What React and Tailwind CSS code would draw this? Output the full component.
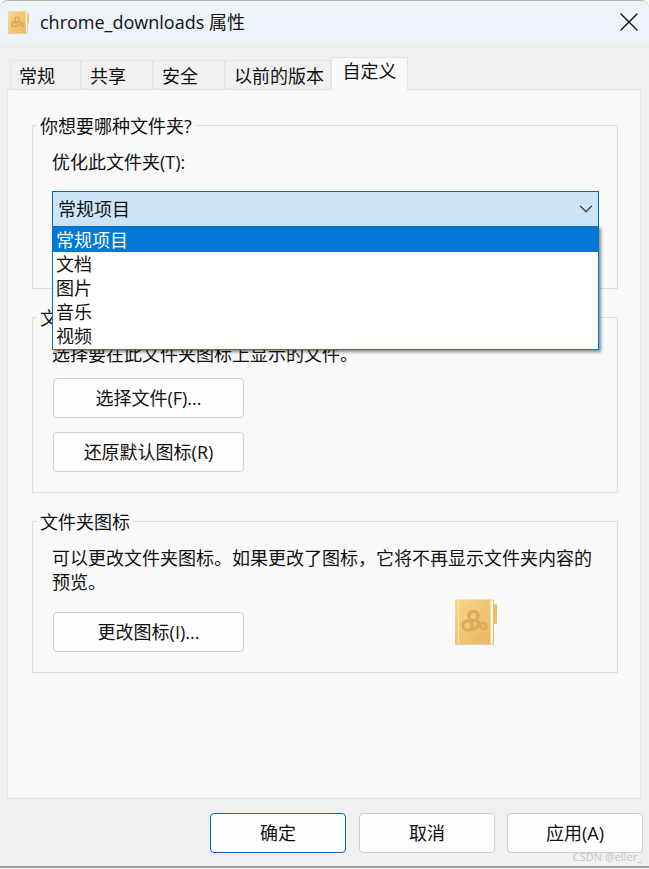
import { X, ChevronDown } from 'lucide-react';

const FONT = "font-['Open_Sans','Noto_Sans_CJK_SC',sans-serif]";

// Folder-book icon with the three-ring emblem, used in title bar and preview
function FolderIcon({ className, id }) {
  return (
    <svg viewBox="0 0 42 46" className={className}>
      <defs>
        <linearGradient id={id} x1="0" y1="0" x2="1" y2="1">
          <stop offset="0" stopColor="#f6d68e" />
          <stop offset="0.55" stopColor="#f0c470" />
          <stop offset="1" stopColor="#e8b55f" />
        </linearGradient>
      </defs>
      <rect x="38.5" y="5" width="3.5" height="20" rx="1.5" fill="#ecbd68" />
      <rect x="0" y="0.5" width="39" height="44.5" rx="1" fill={`url(#${id})`} />
      <rect x="0" y="44.5" width="39" height="1.5" fill="#d8cbb0" />
      <rect x="3" y="1" width="1" height="43.5" fill="#f9e3b0" />
      <rect x="35.5" y="1.5" width="2.5" height="43" fill="#fbf6ea" />
      <g fill="none" stroke="#dcab5a" strokeWidth="3.2">
        <circle cx="18.5" cy="17" r="4.6" />
        <circle cx="12.5" cy="26.5" r="4.6" />
        <path d="M16 30.5C21 31 23 27 25 25C27 23 31 24 31 27" />
        <path d="M22 20.5C24 26 26 30 29 30.5C31 30.5 32 29 31 27" />
      </g>
    </svg>
  );
}

function Tab({ label, w }) {
  return (
    <div className={`${w} h-[29px] flex items-center pl-[8px] pt-[2px] bg-[#f0f0f0] border border-b-0 border-[#e5e5e5] text-[18px] text-[#111]`}>
      {label}
    </div>
  );
}

function Group({ title, h, mt, children }) {
  return (
    <fieldset className={`${h} ${mt} border border-[#dfdfdf] pl-[19px] pr-[18px] ml-[25px] mr-[23px]`}>
      <legend className="relative top-px -ml-[15px] px-[3px] text-[18px] leading-[24px] text-[#111]">{title}</legend>
      {children}
    </fieldset>
  );
}

function Btn({ label, w = 'w-[191px]', primary, className = '' }) {
  return (
    <button className={`${w} ${className} h-[40px] pt-px rounded-[4px] bg-[#fdfdfd] border text-[18px] text-[#111] ${primary ? 'border-[#0067c0]' : 'border-[#d0d0d0]'}`}>
      {label}
    </button>
  );
}

export default function App() {
  return (
    <div className={`${FONT} w-[649px] h-[869px] bg-white overflow-hidden`}>
      <div className="h-[865px] bg-[#f0f0f0] rounded-t-[8px] border-t border-[#b4b4b4] border-b-2 border-b-[#9a9a9a] flex flex-col box-content">
        {/* Title bar */}
        <div className="h-[43px] shrink-0 bg-[#eef3fa] rounded-t-[8px] flex items-center pl-[8px] pr-[4px]">
          <FolderIcon id="small" className="w-[21px] h-[23px]" />
          <span className="ml-[11px] text-[18px] text-[#111]">chrome_downloads 属性</span>
          <X size={32} strokeWidth={1.05} className="ml-auto -mt-[2px] text-[#111]" />
        </div>

        {/* Tabs */}
        <div className="flex items-end pl-[10px] h-[45px] shrink-0">
          <Tab label="常规" w="w-[71px]" />
          <Tab label="共享" w="w-[72px]" />
          <Tab label="安全" w="w-[72px]" />
          <Tab label="以前的版本" w="w-[106px]" />
          <div className="relative z-10 w-[77px] h-[33px] -mb-[1px] pb-[5px] flex items-center justify-center bg-[#f9f9f9] border border-b-0 border-[#e5e5e5] text-[18px] text-[#111]">
            自定义
          </div>
        </div>

        {/* Panel */}
        <div className="ml-[7px] w-[634px] h-[710px] shrink-0 bg-[#f9f9f9] border border-[#e5e5e5]">
          <div className="-ml-[1px] pt-[23px] flex flex-col w-[634px]">
            <Group title="你想要哪种文件夹?" h="h-[176px]">
              <div className="text-[18px] leading-[24px] text-[#111] pt-[13px]">优化此文件夹(T):</div>
              <div className="relative mt-[17px]">
                <div className="h-[36px] pt-px bg-[#cce4f7] border border-[#0067c0] flex items-center justify-between pl-[5px] pr-[1px] text-[18px] text-[#111]">
                  常规项目
                  <ChevronDown size={22} strokeWidth={1.4} className="-mt-px text-[#444]" />
                </div>
                <div className="absolute z-20 left-0 right-0 top-[35px] h-[124px] bg-white border border-[#0078d4] shadow-[2px_2px_3px_rgba(0,0,0,0.45)] text-[18px] leading-[24px] text-[#111]">
                  <div className="h-[25px] mb-px bg-[#0078d4] text-white pl-[3px] pt-[1px]">常规项目</div>
                  <div className="pl-[3px] -mt-px">文档</div>
                  <div className="pl-[3px]">图片</div>
                  <div className="pl-[3px]">音乐</div>
                  <div className="pl-[3px]">视频</div>
                </div>
              </div>
            </Group>

            <Group title="文件夹图片" h="h-[188px]" mt="mt-[16px]">
              <div className="text-[18px] leading-[24px] text-[#111] pt-[13px]">选择要在此文件夹图标上显示的文件。</div>
              <div className="flex flex-col items-start gap-[14px] mt-[12px]">
                <Btn label="选择文件(F)..." className="ml-[1px]" />
                <Btn label="还原默认图标(R)" className="ml-[1px]" />
              </div>
            </Group>

            <Group title="文件夹图标" h="h-[164px]" mt="mt-[16px]">
              <div className="text-[18px] leading-[24px] text-[#111] pt-[13px]">
                可以更改文件夹图标。如果更改了图标，它将不再显示文件夹内容的预览。
              </div>
              <div className="flex items-start mt-[5px]">
                <div className="pt-[13px]">
                  <Btn label="更改图标(I)..." className="ml-[1px]" />
                </div>
                <FolderIcon id="large" className="w-[42px] h-[46px] ml-[211px]" />
              </div>
            </Group>
          </div>
        </div>

        {/* Footer buttons */}
        <div className="relative flex-1 flex justify-end items-start pt-[14px] pr-[6px]">
          <Btn label="确定" w="w-[136px]" primary />
          <Btn label="取消" w="w-[136px]" className="ml-[13px]" />
          <Btn label="应用(A)" w="w-[136px]" className="ml-[12px]" />
          <span className="absolute right-[7px] bottom-[2px] text-[11px] leading-[14px] text-[#c4c4c4]">CSDN @eller_</span>
        </div>
      </div>
    </div>
  );
}
